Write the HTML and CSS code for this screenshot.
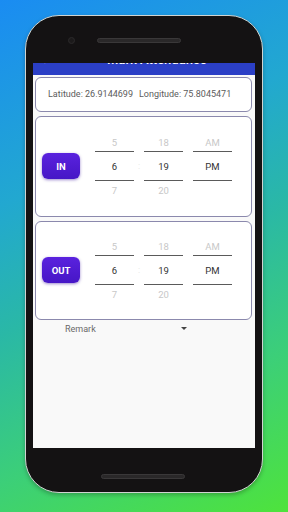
FILE: index.html
```html
<!DOCTYPE html>
<html lang="en">

<head>
    <meta charset="UTF-8">
    <meta name="viewport" content="width=device-width, initial-scale=1.0">
    <title>Attendance</title>
    <link rel="stylesheet" href="styles.css">
</head>

<body>
    <div class="phone">
        <div class="bezel-top">
            <span class="camera"></span>
            <span class="speaker"></span>
        </div>
        <div class="screen">
            <div class="appbar">
                <div class="appbar-row">
                    <span class="back">&#8592;</span>
                    <span class="title">Mark Attendance</span>
                </div>
            </div>
            <div class="card loc">
                <span>Latitude: 26.9144699</span>
                <span>Longitude: 75.8045471</span>
            </div>
            <div class="card time">
                <button class="btn">IN</button>
                <div class="picker">
                    <div class="col">
                        <span class="v dim">5</span>
                        <span class="v cur">6</span>
                        <span class="v dim">7</span>
                    </div>
                    <span class="colon">:</span>
                    <div class="col">
                        <span class="v dim">18</span>
                        <span class="v cur">19</span>
                        <span class="v dim">20</span>
                    </div>
                    <div class="col">
                        <span class="v dim">AM</span>
                        <span class="v cur">PM</span>
                        <span class="v dim"></span>
                    </div>
                </div>
            </div>
            <div class="card time">
                <button class="btn">OUT</button>
                <div class="picker">
                    <div class="col">
                        <span class="v dim">5</span>
                        <span class="v cur">6</span>
                        <span class="v dim">7</span>
                    </div>
                    <span class="colon">:</span>
                    <div class="col">
                        <span class="v dim">18</span>
                        <span class="v cur">19</span>
                        <span class="v dim">20</span>
                    </div>
                    <div class="col">
                        <span class="v dim">AM</span>
                        <span class="v cur">PM</span>
                        <span class="v dim"></span>
                    </div>
                </div>
            </div>
            <div class="remark">
                <span>Remark</span>
                <span class="arrow"></span>
            </div>
        </div>
        <div class="bezel-bottom">
            <span class="speaker"></span>
        </div>
    </div>
</body>

</html>
```

FILE: styles.css
```css
* {
    box-sizing: border-box;
}

body {
    margin: 0;
    width: 288px;
    height: 512px;
    overflow: hidden;
    font-family: Roboto, "Liberation Sans", sans-serif;
    background: linear-gradient(155deg, #1a8cf2 0%, #22a8d0 32%, #2ab8a6 52%, #3ccf78 75%, #4ee33c 100%);
    padding-top: 15px;
    padding-left: 25px;
}

.phone {
    width: 238px;
    height: 478px;
    background: #141213;
    border: 1.5px solid #cfd3d0;
    border-radius: 34px;
    padding: 0 7px;
    display: flex;
    flex-direction: column;
    box-shadow: 0 2px 4px rgba(0, 0, 0, 0.25);
}

.bezel-top {
    height: 46.5px;
    display: flex;
    align-items: center;
    padding-top: 2px;
    padding-left: 35px;
}

.camera {
    width: 7px;
    height: 7px;
    border-radius: 50%;
    background: #1c1a1b;
    border: 1.5px solid #2c2a2b;
}

.speaker {
    width: 84px;
    height: 5px;
    border-radius: 3px;
    background: #2a2829;
    border: 1px solid #3a3839;
}

.bezel-top .speaker {
    margin-left: 22px;
}

.screen {
    height: 385px;
    background: #f9f9f9;
    display: flex;
    flex-direction: column;
}

.appbar {
    height: 12px;
    background: #2b3fc6;
    overflow: hidden;
    display: flex;
    align-items: flex-end;
}

.appbar-row {
    display: flex;
    align-items: center;
    width: 100%;
    padding: 0 0 8px 7px;
    color: #fff;
    font-size: 13px;
    line-height: 14px;
    flex-shrink: 0;
}

.back {
    font-size: 13px;
}

.title {
    margin-left: 54px;
    font-weight: 500;
}

.card {
    background: #fff;
    border: 1.5px solid #8b89ad;
    border-radius: 6px;
    margin: 2px 3px 0 2px;
}

.loc {
    height: 35px;
    display: flex;
    align-items: center;
    gap: 6px;
    padding-left: 12px;
    font-size: 9px;
    color: #5c5c5c;
}

.time {
    height: 101px;
    margin-top: 4px;
    display: flex;
    align-items: center;
    padding-left: 6px;
}

.time + .time {
    height: 99px;
}

.btn {
    width: 38px;
    height: 26px;
    border: none;
    border-radius: 6px;
    background: linear-gradient(180deg, #5a22de, #4616c6);
    color: #fff;
    font-family: Roboto, "Liberation Sans", sans-serif;
    font-weight: bold;
    font-size: 9.5px;
    box-shadow: 0 1px 3px rgba(60, 20, 160, 0.5);
    padding: 0;
}

.picker {
    display: flex;
    margin-left: 15px;
    align-items: center;
}

.col {
    width: 39px;
    display: flex;
    flex-direction: column;
    margin-right: 10px;
}

.colon {
    width: 0;
    margin-left: -6px;
    margin-right: 6px;
    color: #e6e6e6;
    font-size: 9px;
}

.v {
    display: flex;
    align-items: center;
    justify-content: center;
    font-size: 9.5px;
}

.dim {
    height: 18px;
    color: #c8c8c8;
}

.cur {
    height: 30px;
    color: #333;
    border-top: 1px solid #5a5a5a;
    border-bottom: 1px solid #5a5a5a;
}

.remark {
    display: flex;
    align-items: center;
    height: 16px;
    padding-left: 32px;
    font-size: 9px;
    color: #6a6a6a;
    margin-top: 1px;
}

.arrow {
    margin-left: 85px;
    width: 0;
    height: 0;
    border-left: 3px solid transparent;
    border-right: 3px solid transparent;
    border-top: 3px solid #444;
}

.bezel-bottom {
    flex: 1;
    display: flex;
    justify-content: center;
    padding-top: 26px;
    padding-right: 2px;
}
```
